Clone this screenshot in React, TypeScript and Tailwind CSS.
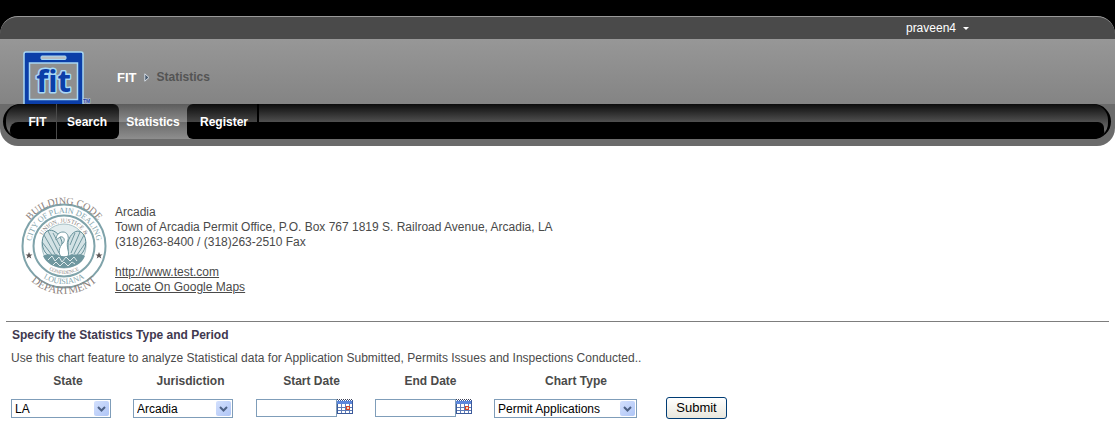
import { useState } from "react";

const navItems = ["FIT", "Search", "Statistics", "Register"];

const navStyles: Record<string, string> = {
  FIT: "w-10 pl-[2px] border-r border-[#4a4a4a]",
  Search:
    "relative z-10 w-[62px] pr-[2px] rounded-r-md bg-[linear-gradient(#0c0c0c,#454545_18px,#000_18px)]",
  Statistics:
    "-mx-[6px] w-20 bg-[linear-gradient(#5c5c5c,#8a8a8a_50%,#686868_50%,#8e8e8e)]",
  Register:
    "relative z-10 w-[70px] pl-1 rounded-l-md bg-[linear-gradient(#0c0c0c,#454545_18px,#000_18px)]",
};

export default function App() {
  return (
    <div className="bg-white pb-6 font-['Liberation_Sans',Arial,sans-serif] text-xs text-[#4a4a4a]">
      <Header />
      <main>
        <Office />
        <StatisticsForm />
      </main>
    </div>
  );
}

function Header() {
  return (
    <header className="bg-[linear-gradient(black_60px,white_60px)] pt-4">
      <div className="overflow-hidden rounded-[18px] bg-[#6b6b6b] pb-[7px]">
        <div className="flex h-[23px] items-center justify-end rounded-t-[18px] border-t border-[#999] bg-[#4a4a4a] pr-[146px]">
          <button type="button" className="flex items-center gap-[7px] text-white">
            praveen4
            <svg width="6" height="3" viewBox="0 0 6 3" aria-hidden="true">
              <path d="M0 0h6L3 3z" fill="#fff" />
            </svg>
          </button>
        </div>
        <div className="flex h-[65px] items-end bg-linear-to-b from-[#979797] to-[#848484] pl-[23px]">
          <Logo />
          <div className="flex items-center gap-[7px] self-center pt-3 pl-[25px] font-bold">
            <a href="#fit" className="text-[13px] text-white">
              FIT
            </a>
            <svg width="6" height="9" viewBox="0 0 6 9" aria-hidden="true">
              <path d="M.8.8v7.400L5 4.500z" fill="#46586b" stroke="#d5dde6" />
            </svg>
            <span className="text-xs text-[#545454]">Statistics</span>
          </div>
        </div>
        <Nav />
      </div>
    </header>
  );
}

function Nav() {
  return (
    <nav className="mr-1 ml-[3px] flex h-[35px] rounded-[18px] bg-black px-[3px]">
      <div className="relative flex flex-1 overflow-hidden rounded-[16px] bg-[linear-gradient(#0c0c0c,#505050_18px,#6a6a6a_26px,#000_33px)]">
        {/* glossy lower half */}
        <span className="absolute inset-x-1 top-[18px] bottom-0 rounded-l-[8px] rounded-r-[6px] bg-black" />
        <ul className="relative flex pl-[11px] font-bold text-white">
          {navItems.map((item) => (
            <li key={item} className="flex">
              <a
                href={`#${item.toLowerCase()}`}
                className={`flex items-center justify-center ${navStyles[item]}`}
              >
                {item}
              </a>
            </li>
          ))}
          <li className="h-[18px] w-[2px] bg-black" aria-hidden="true" />
        </ul>
      </div>
    </nav>
  );
}

function Logo() {
  return (
    <svg width="69" height="53" viewBox="0 0 69 53" role="img" aria-label="fit">
      <rect x="1" y="1" width="59" height="60" rx="2" fill="#0b3ea8" stroke="#a9d8f5" strokeWidth="1.5" />
      <rect x="18" y="5" width="25" height="3.5" rx="1" fill="#b5bcc2" stroke="#a9d8f5" />
      <rect x="6.5" y="12" width="48" height="36.5" fill="#8f8f8f" stroke="#a9d8f5" strokeWidth="1.5" />
      <text
        x="30.5"
        y="41"
        textAnchor="middle"
        className="font-['Noto_Sans',sans-serif] text-[31px] font-bold"
        fill="#0b3ea8"
        stroke="#a9d8f5"
        strokeWidth="3"
        strokeLinejoin="round"
        paintOrder="stroke"
      >
        fit
      </text>
      <text x="60" y="52" fontSize="5" fontWeight="700" fill="#24409c" stroke="#b8cbe8" strokeWidth="1" paintOrder="stroke">
        TM
      </text>
    </svg>
  );
}

function Office() {
  return (
    <section className="flex pt-[50px] pl-5">
      <Seal />
      <div className="pt-[9px] pl-[7px] leading-[15px]">
        <p>Arcadia</p>
        <p>
          Town of Arcadia Permit Office, P.O. Box 767 1819 S. Railroad Avenue,
          Arcadia, LA
        </p>
        <p>(318)263-8400 / (318)263-2510 Fax</p>
        <div className="flex flex-col items-start pt-[15px] underline">
          <a href="http://www.test.com">http://www.test.com</a>
          <a href="#map">Locate On Google Maps</a>
        </div>
      </div>
    </section>
  );
}

function Seal() {
  return (
    <svg
      width="88"
      height="100"
      viewBox="0 0 88 100"
      className="overflow-visible font-['Liberation_Serif',serif]"
      role="img"
      aria-label="Building Code Department seal"
    >
      <defs>
        <path id="outerTop" d="M1 51a43 43 0 0 1 86 0" />
        <path id="outerBottom" d="M-5 49a49 49 0 0 0 98 0" />
        <path id="cityTop" d="M11 50a33 33 0 0 1 66 0" />
        <path id="cityBottom" d="M6 50a38 38 0 0 0 76 0" />
        <path id="mottoTop" d="M20.500 50a23.500 23.500 0 0 1 47 0" />
        <path id="mottoBottom" d="M16 50a28 28 0 0 0 56 0" />
      </defs>
      <circle cx="44" cy="50" r="41.500" fill="#fff" stroke="#7fa3aa" strokeWidth="2" />
      <circle cx="44" cy="50" r="30.500" fill="none" stroke="#7fa3aa" strokeWidth="2" />
      <circle cx="44" cy="50" r="22" fill="#e3edef" stroke="#a5bfc4" />
      <g textAnchor="middle">
        <text fontSize="10" fill="#8d7f7c">
          <textPath href="#outerTop" startOffset="50%">BUILDING CODE</textPath>
        </text>
        <text fontSize="11" fill="#8d7f7c">
          <textPath href="#outerBottom" startOffset="50%">DEPARTMENT</textPath>
        </text>
        <text fontSize="8" fill="#7fa3aa">
          <textPath href="#cityTop" startOffset="50%">CITY OF PLAIN DEALING</textPath>
        </text>
        <text fontSize="8" fill="#7fa3aa">
          <textPath href="#cityBottom" startOffset="50%">LOUISIANA</textPath>
        </text>
        <text fontSize="6" fill="#8d8583">
          <textPath href="#mottoTop" startOffset="50%">UNION, JUSTICE &amp;</textPath>
        </text>
        <text fontSize="5" fill="#8d8583">
          <textPath href="#mottoBottom" startOffset="50%">CONFIDENCE</textPath>
        </text>
      </g>
      <path d="M9 56l1 2.500h2.500l-2 1.500.8 2.500L9 61l-2.300 1.500.8-2.500-2-1.500H8zM79 56l1 2.500h2.500l-2 1.500.8 2.500L79 61l-2.300 1.500.8-2.500-2-1.500H78z" fill="#5b5556" />
      {/* pelican with spread wings */}
      <path d="M42 46c-2-8-9-14-15-11-6 5-6 15-2 21 4 5 10 7 16 7zM48 46c2-8 8-13 13-10 6 4 6 14 2 20-3 5-9 7-15 7z" fill="#d3e2e5" stroke="#5f8c95" />
      <path d="M24 39l11 19M22 46l10 13M28 35l11 22M33 37l7 13M64 39l-10 19M66 46l-9 13M60 36l-9 21M55 37l-5 12" stroke="#6f979f" fill="none" />
      <path d="M43 63c-6-5-4-12 0-16 3-4 0-7-3-6l-4 3c0-5 3-8 7-8s6 4 5 8c-1 3-1 6 0 10s1 8-5 9z" fill="#fff" stroke="#6f979f" />
      <path d="M23 60c5-4 9 0 13-2 5 3 11 3 16 0 4 2 8-2 13 2-3 8-11 12-21 12s-18-5-21-12z" fill="#6f979f" />
      <path d="M28 64l4-4 3 5 4-4 3 5 4-5 4 4 4-4 3 4M33 69l3-3 4 4 4-4 4 4 4-4 3 2" stroke="#dfeaec" fill="none" />
    </svg>
  );
}

const label = "mb-[11px] block text-center font-bold leading-[14px]";

function StatisticsForm() {
  return (
    <section className="mx-[6px] mt-[25px] border-t border-[#7d7d7d] pt-[6px] pl-[5px]">
      <h2 className="pl-px leading-[15px] font-bold text-[#40384f]">
        Specify the Statistics Type and Period
      </h2>
      <p className="pt-2 leading-[15px]">
        Use this chart feature to analyze Statistical data for Application
        Submitted, Permits Issues and Inspections Conducted..
      </p>
      <form
        className="grid grid-cols-[114px_115px_111px_111px_164px_auto] items-end justify-start gap-x-2 pt-2"
        onSubmit={(e) => e.preventDefault()}
      >
        <SelectField id="state" name="State" options={["LA"]} width="w-[100px]" />
        <SelectField id="jurisdiction" name="Jurisdiction" options={["Arcadia"]} width="w-[100px]" />
        <DateField id="start" name="Start Date" />
        <DateField id="end" name="End Date" />
        <SelectField id="chart" name="Chart Type" options={["Permit Applications"]} width="w-[143px]" />
        <button
          type="submit"
          className="-mb-px h-[22px] w-[61px] rounded-[3px] border border-[#003c74] bg-linear-to-b from-white to-[#e9e7dd] text-[13px] leading-5 text-black"
        >
          Submit
        </button>
      </form>
    </section>
  );
}

type FieldProps = { id: string; name: string };

function SelectField({ id, name, options, width }: FieldProps & { options: string[]; width: string }) {
  return (
    <div>
      <label htmlFor={id} className={label}>
        {name}
      </label>
      <div className={`relative ${width}`}>
        <select
          id={id}
          className="block h-[19px] w-full appearance-none border border-[#7f9db9] bg-white pt-px pl-[3px] text-xs leading-4 text-black"
        >
          {options.map((option) => (
            <option key={option}>{option}</option>
          ))}
        </select>
        <span className="pointer-events-none absolute top-[2px] right-[2px] flex h-[15px] w-[15px] items-center justify-center rounded-[2px] bg-linear-to-br from-[#d3e0fd] to-[#afc5f6]">
          <svg width="9" height="6" viewBox="0 0 9 6" aria-hidden="true">
            <path d="M1 1l3.500 3.500L8 1" fill="none" stroke="#4d6185" strokeWidth="2" />
          </svg>
        </span>
      </div>
    </div>
  );
}

function DateField({ id, name }: FieldProps) {
  const [value, setValue] = useState("");

  return (
    <div>
      <label htmlFor={id} className={label}>
        {name}
      </label>
      <div className="flex h-[19px] items-start">
        <input
          id={id}
          type="text"
          value={value}
          onChange={(e) => setValue(e.target.value)}
          className="h-[18px] w-[81px] border border-[#7f9db9] bg-white px-1 text-black"
        />
        <button type="button" aria-label={`Pick ${name}`}>
          <CalendarIcon />
        </button>
      </div>
    </div>
  );
}

function CalendarIcon() {
  return (
    <svg width="16" height="15" viewBox="0 0 16 15" shapeRendering="crispEdges" aria-hidden="true">
      <path d="M0 1h16v14H0z" fill="#3c5a9a" />
      <path d="M0 2h15v3H0z" fill="#5b86dc" />
      <path d="M1 5h14v9H1z" fill="#fff" />
      <path d="M1 8.500h14M1 11.500h14M4.500 5v9M8.500 5v9M12.500 5v9" stroke="#5f7cb8" />
      <path d="M0 .5h16" stroke="#3a3f55" strokeDasharray="1 1" />
      <path d="M0 1.500h16" stroke="#fff" strokeDasharray="1 1" />
      <path d="M9.500 7.500h3v3h-3z" fill="#f7d9b0" stroke="#d8432b" />
    </svg>
  );
}
